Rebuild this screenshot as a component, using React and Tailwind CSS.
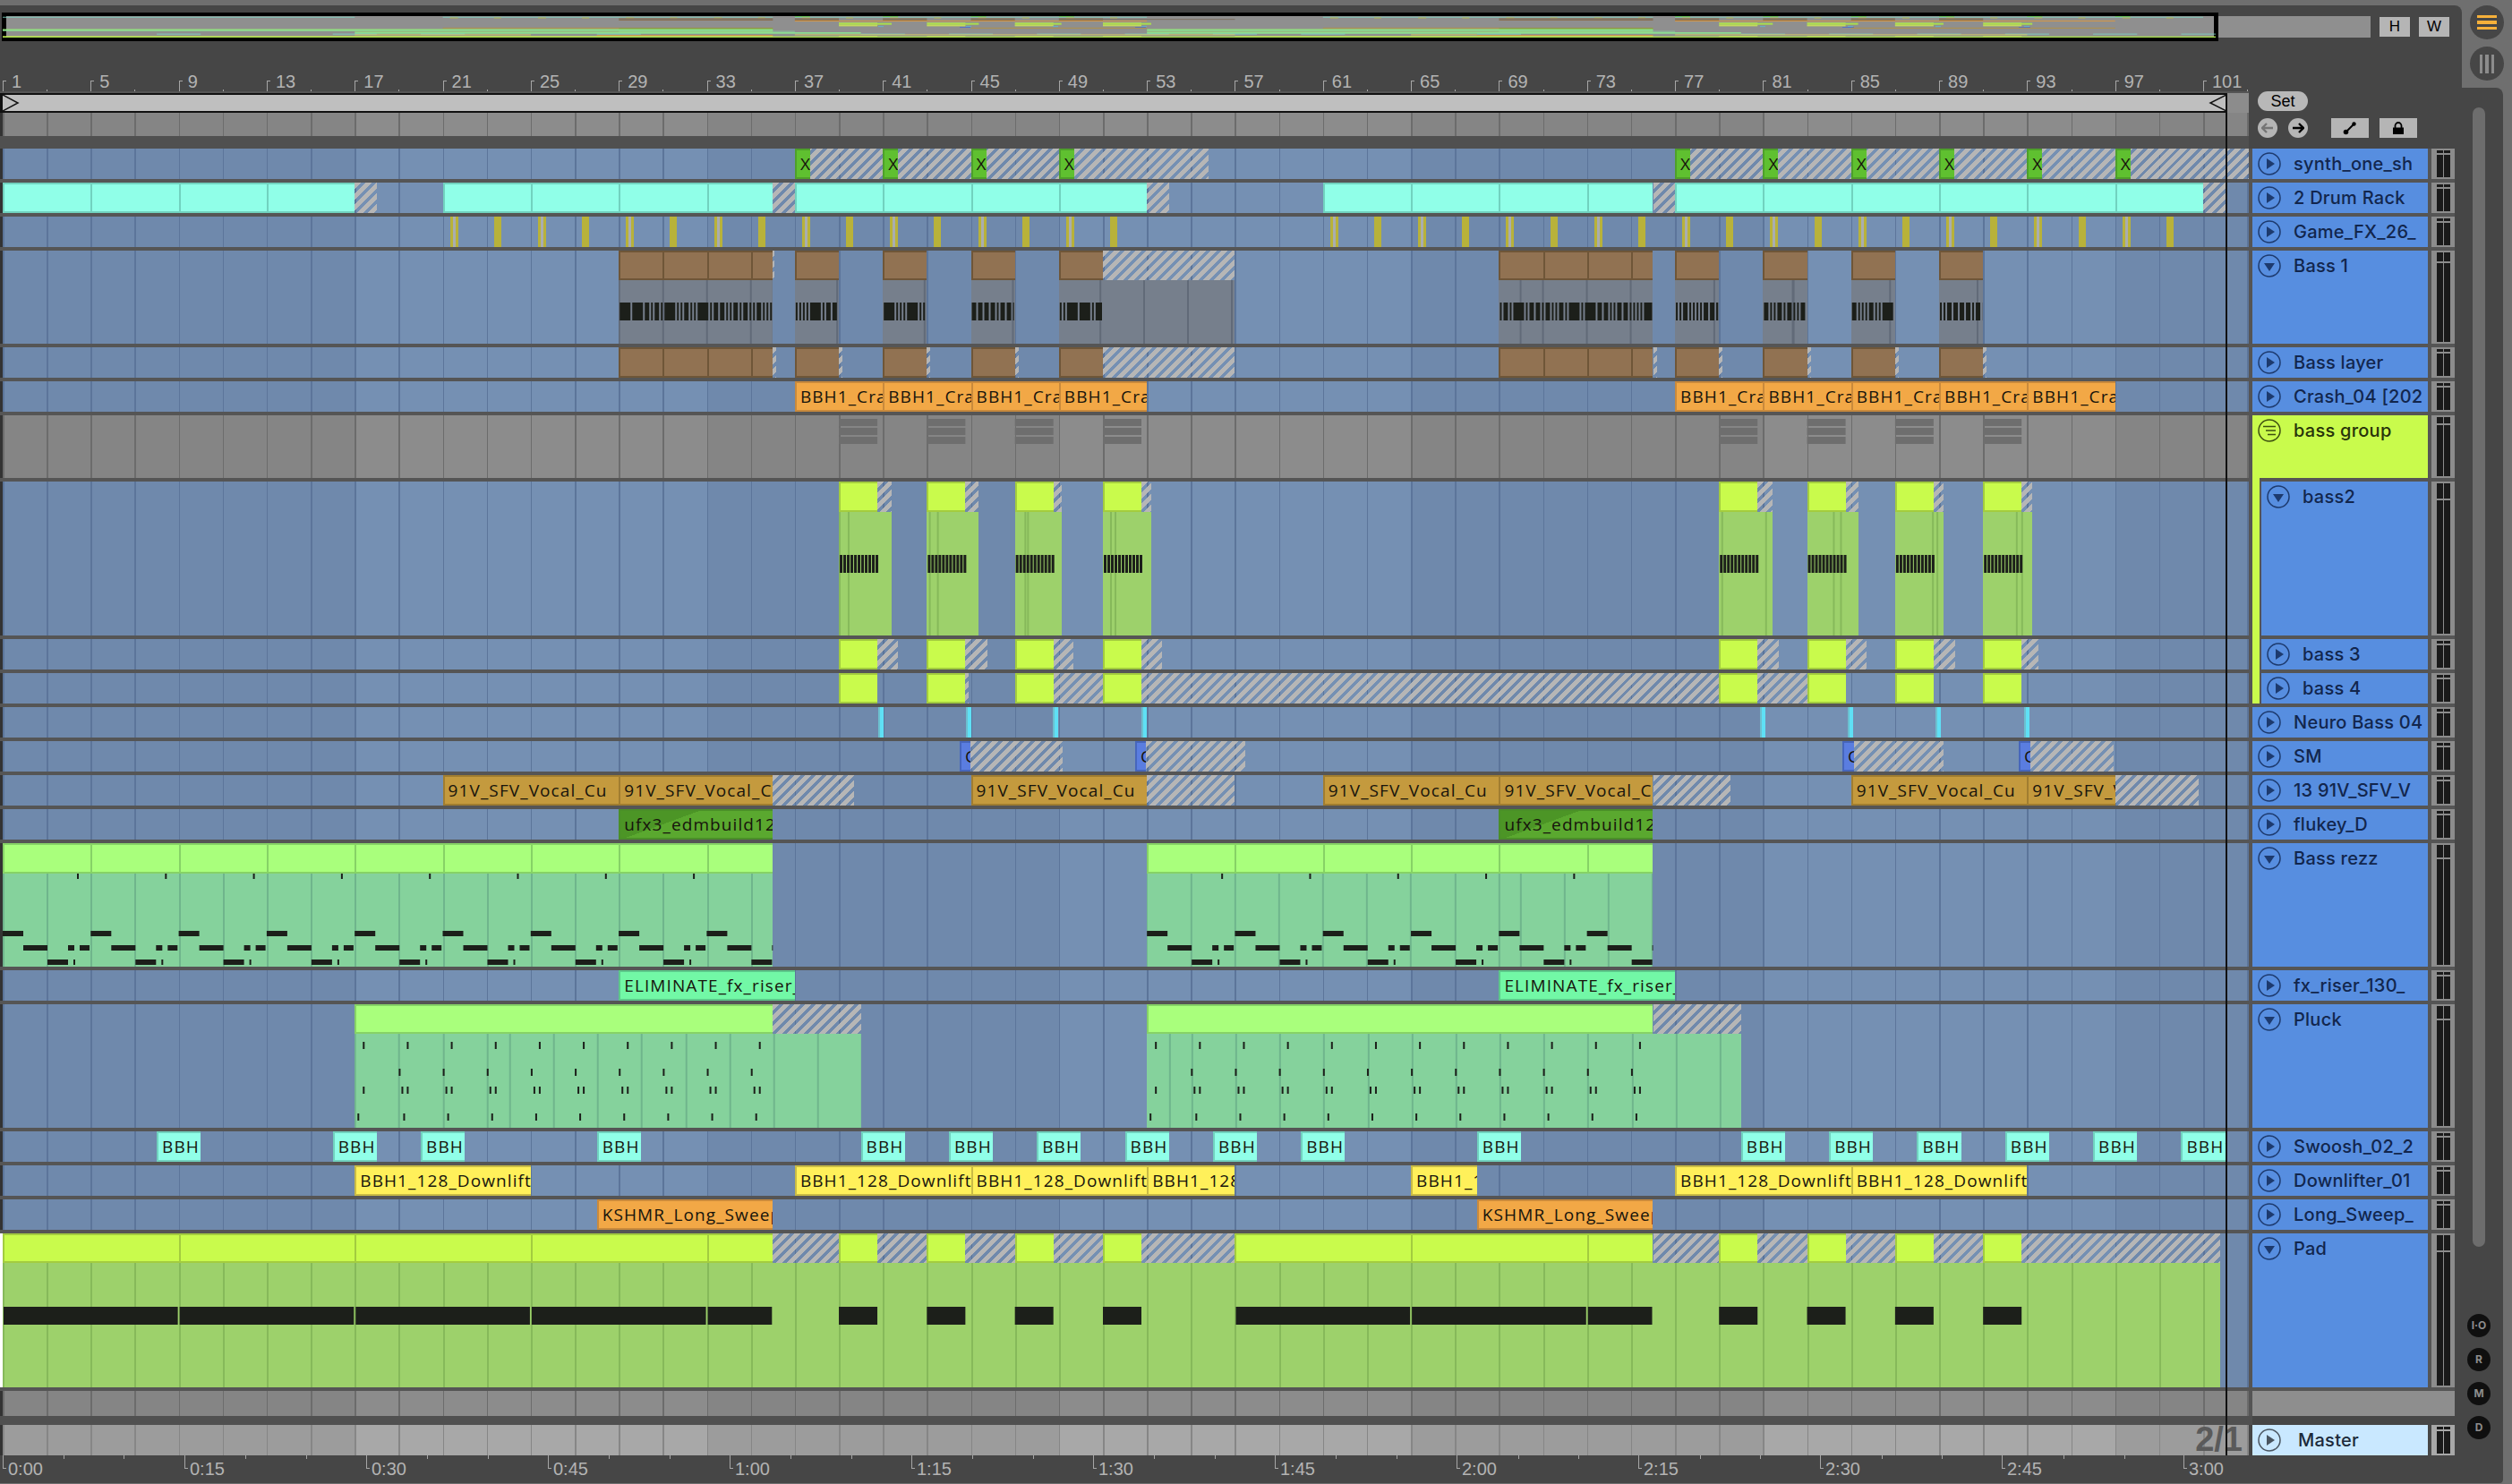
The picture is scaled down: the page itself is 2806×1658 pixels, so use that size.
import React from 'react';

// timeline helpers: bar number or screen x to lane coordinates
const BAR = 24.58;
const b = (n) => (n - 1) * BAR;
const px = (x) => x - 3;

const tones = {
  hatch: { cls: 'bg-[repeating-linear-gradient(135deg,#b6b6b6_0,#b6b6b6_5px,transparent_5px,transparent_8.5px)]' },
  cyan: { cls: 'bg-[#90ffe8] border-2 border-r-0 border-[#71d2bf]', div: 'bg-[#71d2bf]', ov: '#7fd8c8' },
  brown: { cls: 'bg-[#917252] border-y-2 border-l-2 border-[#6f5638]', div: 'bg-[#6f5638]', ov: '#8a6a45' },
  orange: { cls: 'bg-[#f2a846] border-2 border-r-0 border-[#c98a3c]', ov: '#e89a35' },
  lime: { cls: 'bg-[#c9fb4c] border-y-2 border-l-2 border-[#a3cc3f]', div: 'bg-[#a3cc3f]', ov: '#d4f050' },
  mint: { cls: 'bg-[#a9ff7c] border-2 border-r-0 border-[#86d266]', div: 'bg-[#86d266]', ov: '#9cf070' },
  vocal: { cls: 'bg-[#c49a3e] border-2 border-r-0 border-[#a17d30]', ov: '#b8923a' },
  flukey: { cls: 'bg-[linear-gradient(160deg,#4c9526_0,#4c9526_35%,#5aa82f_35%)] border-2 border-r-0 border-[#4a8f28]', ov: '#5aa82f' },
  riser: { cls: 'bg-[#72f8a6] border-2 border-r-0 border-[#5cc98a]', ov: '#88d8a0' },
  yellow: { cls: 'bg-[#fff05a] border-2 border-r-0 border-[#c9bb45]', ov: '#e0d060' },
  x: { cls: 'bg-[#5fc030] border-2 border-r-0 border-[#4ea02a]', ov: '#5fc030' },
  sm: { cls: 'bg-[#5a7de0] border-2 border-r-0 border-[#4666bc]', ov: '#4a6ad0' },
  neuro: { cls: 'bg-[#5fe0f5] border-l-2 border-[#6cc0d0]', ov: '#5bb8d8' },
  tick: { cls: 'bg-[#b8b23a]', ov: '#c0b840' },
  tick2: { cls: 'bg-[linear-gradient(90deg,#b8b23a_0,#b8b23a_3px,#a9adb0_3px,#a9adb0_6px,#b8b23a_6px)]', ov: '#c0b840' },
  bodyGreen: { cls: 'bg-[repeating-linear-gradient(90deg,#6fb58c_0,#6fb58c_2px,#85d29c_2px,#85d29c_49.16px)]', grid: true, ov: '#8ce090' },
  bodyLime: { cls: 'bg-[repeating-linear-gradient(90deg,#86b95a_0,#86b95a_2px,#9dd16b_2px,#9dd16b_49.16px)]', grid: true, ov: '#a8dc50' },
  bodySlate: { cls: 'bg-[repeating-linear-gradient(90deg,#616a78_0,#616a78_2px,#767f8c_2px,#767f8c_49.16px)]', grid: true, ov: '#7f7468' },
};

const laneBlue =
  'bg-[repeating-linear-gradient(90deg,#5c759a_0,#5c759a_1.5px,transparent_1.5px,transparent_49.16px),repeating-linear-gradient(90deg,#6f89ac_0,#6f89ac_393.3px,#7590b3_393.3px,#7590b3_786.6px)]';
const laneGray =
  'bg-[repeating-linear-gradient(90deg,#6c6c6c_0,#6c6c6c_1.5px,transparent_1.5px,transparent_49.16px),repeating-linear-gradient(90deg,#858585_0,#858585_393.3px,#8c8c8c_393.3px,#8c8c8c_786.6px)]';
const laneLight =
  'bg-[repeating-linear-gradient(90deg,#868686_0,#868686_1.5px,transparent_1.5px,transparent_49.16px),repeating-linear-gradient(90deg,#9c9c9c_0,#9c9c9c_393.3px,#a8a8a8_393.3px,#a8a8a8_786.6px)]';

const c = (tone, from, to, opts = {}) => ({ tone, from, to, ...opts });
const label = (tone, text, from, to) => c(tone, b(from), b(to), { text });

// repeated bass pattern
const starts = [39, 43, 47, 51, 79, 83, 87, 91];
const limes = starts.map((n) => [b(n), b(n) + 43]);
const tails2 = [59, 58, 52, 54, 60, 57, 54, 55];
const tails3 = [66, 68, 65, 66, 67, 66, 67, 62];

const barcode = (x0, x1, seed, y, h) => {
  const out = [];
  let r = seed;
  let x = x0;
  while (x < x1) {
    r = (r * 137 + 71) % 256;
    const w = r % 7 === 0 ? 12 : r % 3 === 0 ? 5 : 2;
    out.push([x, y, Math.min(w, x1 - x), h]);
    x += w + 2;
  }
  return out;
};

const stripes = (x0, x1, y, h) => {
  const out = [];
  for (let x = x0; x < x1 - 1; x += 4) out.push([x, y, 3, h]);
  return out;
};

const bassRanges = [[29, 36], [37, 39], [41, 43], [45, 47], [49, 51], [69, 76], [77, 79], [81, 83], [85, 87], [89, 91]];

const rezzNotes = (from, to) => {
  const out = [];
  const pattern = [[83, 34, 2, 6], [0, 98, 23, 6], [23, 114, 27, 6], [73, 114, 7, 6], [86, 114, 11, 6], [50, 130, 23, 6], [79, 130, 2, 6]];
  for (let o = from; o < to; o += 98.3) {
    pattern.forEach(([x, y, w, h]) => {
      if (o + x < to) out.push([o + x, y, Math.min(w, to - o - x), h]);
    });
  }
  return out;
};

// notes stop where the clip's loop ends, the hatched tail stays empty
const pluckNotes = (from, to) => {
  const out = [];
  let i = 0;
  for (let o = from; o < to - 6; o += 49.16) {
    out.push([o + 9, 42, 2, 8], [o + 9, 92, 2, 8]);
    if (i > 0) out.push([o, 72, 2, 8], [o + 3, 92, 2, 8], [o + 5, 122, 2, 8]);
    else out.push([o + 3, 122, 2, 8]);
    i += 1;
  }
  return out;
};

const gameTicks = [];
[[21, 51], [61, 99]].forEach(([s, e]) => {
  for (let n = s, i = 0; n <= e; n += 2, i += 1) {
    gameTicks.push(c(i % 2 === 1 ? 'tick' : 'tick2', b(n) + 8, b(n) + (i % 2 === 1 ? 16 : 17)));
  }
});

const padNotes = [];
for (let n = 1; n < 36; n += 8) padNotes.push([b(n) + 1, 82, Math.min(8, 36 - n) * BAR - 2, 20]);
for (let n = 57; n < 76; n += 8) padNotes.push([b(n) + 1, 82, Math.min(8, 76 - n) * BAR - 2, 20]);

const rows = [
  {
    name: 'synth_one_sh', h: 34,
    clips: [
      c('hatch', b(37), b(55.8)), c('hatch', b(77), 2509),
      ...[37, 41, 45, 49, 77, 81, 85, 89, 93, 97].map((n) => c('x', b(n), b(n) + 17, { text: 'X' })),
    ],
  },
  {
    name: '2 Drum Rack', h: 34,
    clips: [
      ...[[1, 17], [21, 36], [37, 53], [61, 76], [77, 101]].map(([s, e]) => c('cyan', b(s), b(e), { step: 4 })),
      ...[17, 36, 53, 76].map((n) => c('hatch', b(n), b(n + 1))),
      c('hatch', b(101), px(2487)),
    ],
  },
  { name: 'Game_FX_26_', h: 34, clips: gameTicks },
  {
    name: 'Bass 1', h: 104, icon: 'down',
    clips: [
      ...bassRanges.map(([s, e]) => c('bodySlate', b(s), b(e), { top: 33 })),
      ...bassRanges.map(([s, e]) => c('brown', b(s), b(e), { h: 33, step: 2 })),
      c('hatch', b(51), b(57), { h: 33 }),
      c('bodySlate', b(51), b(57), { top: 33 }),
      c('hatch', b(36), b(36) + 2, { h: 33 }),
    ],
    notes: bassRanges.flatMap(([s, e], i) => barcode(b(s) + 1, b(e) - 1, 40 + i * 23, 58, 20)),
  },
  {
    name: 'Bass layer', h: 34,
    clips: [
      ...bassRanges.map(([s, e]) => c('brown', b(s), b(e), { step: 2 })),
      ...bassRanges.map(([, e]) => c('hatch', b(e), b(e) + 4)),
      c('hatch', b(51), b(57)),
    ],
  },
  {
    name: 'Crash_04 [202', h: 34,
    clips: [37, 41, 45, 49, 77, 81, 85, 89, 93].map((n) => label('orange', 'BBH1_Cra', n, n + 4)),
  },
  {
    name: 'bass group', h: 70, icon: 'group', head: 'lime', lane: laneGray,
    clips: [],
    notes: starts.flatMap((n) => [[b(n), 4, 43, 8], [b(n), 14, 43, 8], [b(n), 24, 43, 8]]),
    noteFill: '#6e6e6e',
  },
  {
    name: 'bass2', h: 172, icon: 'down', nested: true,
    clips: [
      ...limes.map(([s], i) => c('bodyLime', s, s + tails2[i], { top: 34 })),
      ...limes.map(([s, e]) => c('lime', s, e, { h: 34 })),
      ...limes.map(([s, e], i) => c('hatch', e, s + tails2[i], { h: 34 })),
    ],
    notes: limes.flatMap(([s, e]) => stripes(s + 1, e, 82, 20)),
  },
  {
    name: 'bass 3', h: 34, nested: true,
    clips: [
      ...limes.map(([s, e]) => c('lime', s, e)),
      ...limes.map(([s, e], i) => c('hatch', e, s + tails3[i])),
    ],
  },
  {
    name: 'bass 4', h: 34, nested: true,
    clips: [
      ...limes.map(([s, e]) => c('lime', s, e)),
      c('hatch', limes[1][1], limes[1][1] + 4),
      c('hatch', limes[2][1], limes[3][0]),
      c('hatch', limes[3][1], limes[4][0]),
      c('hatch', limes[4][1], limes[5][0]),
    ],
  },
  {
    name: 'Neuro Bass 04', h: 34,
    clips: [981, 1079, 1176, 1275, 1966, 2064, 2162, 2261].map((x) => c('neuro', px(x), px(x) + 6)),
  },
  {
    name: 'SM', h: 34,
    clips: [[1072, 1084, 1187], [1268, 1280, 1391], [2058, 2071, 2171], [2255, 2268, 2361]].flatMap(([s, m, e]) => [
      c('sm', px(s), px(m), { text: 'C' }),
      c('hatch', px(m), px(e)),
    ]),
  },
  {
    name: '13 91V_SFV_V', h: 34,
    clips: [
      label('vocal', '91V_SFV_Vocal_Cu', 21, 29), label('vocal', '91V_SFV_Vocal_Cu', 29, 36), c('hatch', b(36), b(39.7)),
      label('vocal', '91V_SFV_Vocal_Cu', 45, 53), c('hatch', b(53), b(57)),
      label('vocal', '91V_SFV_Vocal_Cu', 61, 69), label('vocal', '91V_SFV_Vocal_Cu', 69, 76), c('hatch', b(76), b(79.5)),
      label('vocal', '91V_SFV_Vocal_Cu', 85, 93), label('vocal', '91V_SFV_Vocal_Cu', 93, 97), c('hatch', b(97), b(100.8)),
    ],
  },
  {
    name: 'flukey_D', h: 34,
    clips: [label('flukey', 'ufx3_edmbuild128', 29, 36), label('flukey', 'ufx3_edmbuild128', 69, 76)],
  },
  {
    name: 'Bass rezz', h: 138, icon: 'down',
    clips: [
      c('bodyGreen', b(1), b(36), { top: 34 }), c('bodyGreen', b(53), b(76), { top: 34 }),
      c('mint', b(1), b(36), { h: 34, step: 4 }), c('mint', b(53), b(76), { h: 34, step: 4 }),
    ],
    notes: [...rezzNotes(b(1), b(36)), ...rezzNotes(b(53), b(76))],
  },
  {
    name: 'fx_riser_130_', h: 34,
    clips: [label('riser', 'ELIMINATE_fx_riser_', 29, 37), label('riser', 'ELIMINATE_fx_riser_', 69, 77)],
  },
  {
    name: 'Pluck', h: 138, icon: 'down',
    clips: [
      c('bodyGreen', b(17), b(40), { top: 33 }), c('bodyGreen', b(53), b(80), { top: 33 }),
      c('mint', b(17), b(36), { h: 33 }), c('mint', b(53), b(76), { h: 33 }),
      c('hatch', b(36), b(40), { h: 33 }), c('hatch', b(76), b(80), { h: 33 }),
    ],
    notes: [...pluckNotes(b(17), b(36)), ...pluckNotes(b(53), b(76))],
  },
  {
    name: 'Swoosh_02_2', h: 34,
    clips: [8, 16, 20, 28, 40, 44, 48, 52, 56, 60, 68, 80, 84, 88, 92, 96, 100].map((n) => label('cyan', 'BBH1_', n, n + 2)),
  },
  {
    name: 'Downlifter_01', h: 34,
    clips: [[17, 25], [37, 45], [45, 53], [53, 57], [65, 68], [77, 85], [85, 93]].map(([s, e]) => label('yellow', 'BBH1_128_Downlifter', s, e)),
  },
  {
    name: 'Long_Sweep_', h: 34,
    clips: [label('orange', 'KSHMR_Long_Sweep', 28, 36), label('orange', 'KSHMR_Long_Sweep', 68, 76)],
  },
  {
    name: 'Pad', h: 172, icon: 'down',
    clips: [
      c('bodyLime', b(1), px(2480), { top: 33 }),
      c('lime', b(1), b(36), { h: 33, step: 8 }),
      c('lime', b(57), b(76), { h: 33, step: 8 }),
      ...limes.map(([s, e]) => c('lime', s, e, { h: 33 })),
      c('hatch', b(36), limes[0][0], { h: 33 }),
      c('hatch', limes[0][1], limes[1][0], { h: 33 }),
      c('hatch', limes[1][1], limes[2][0], { h: 33 }),
      c('hatch', limes[2][1], limes[3][0], { h: 33 }),
      c('hatch', limes[3][1], b(57), { h: 33 }),
      c('hatch', b(76), limes[4][0], { h: 33 }),
      c('hatch', limes[4][1], limes[5][0], { h: 33 }),
      c('hatch', limes[5][1], limes[6][0], { h: 33 }),
      c('hatch', limes[6][1], limes[7][0], { h: 33 }),
      c('hatch', limes[7][1], px(2480), { h: 33 }),
    ],
    notes: [...padNotes, ...limes.map(([s, e]) => [s, 82, e - s, 20])],
    selected: true,
  },
];

const Clip = ({ clip }) => {
  const tone = tones[clip.tone];
  const width = clip.to - clip.from;
  const style = { left: clip.from, width, top: clip.top ?? 0 };
  if (clip.h) style.height = clip.h;
  else style.bottom = 0;
  if (tone.grid) style.backgroundPositionX = -clip.from;
  const dividers = [];
  if (clip.step) {
    for (let o = clip.step * BAR; o < width - 4; o += clip.step * BAR) dividers.push(o);
  }
  return (
    <div className={`absolute overflow-hidden ${tone.cls}`} style={style}>
      {dividers.map((o) => (
        <div key={o} className={`absolute inset-y-0 w-0.5 ${tone.div}`} style={{ left: o - 2 }} />
      ))}
      {clip.text && (
        <div className="flex h-full items-center whitespace-nowrap pl-1 font-['Open_Sans',sans-serif] text-[19px] leading-none tracking-[1.1px] text-[#17140c]">
          {clip.text}
        </div>
      )}
    </div>
  );
};

const Notes = ({ row }) => (
  <svg className="absolute inset-0" width="2509" height={row.h}>
    {row.notes.map(([x, y, w, h], i) => (
      <rect key={i} x={x} y={y} width={w} height={h} fill={row.noteFill || '#1c1f1a'} />
    ))}
  </svg>
);

const Lane = ({ row }) => (
  <div
    className={`relative w-[2512px] shrink-0 overflow-hidden border-l-[3px] ${row.selected ? 'border-white' : 'border-[#333333]'} ${row.lane || laneBlue}`}
  >
    {row.clips.map((clip, i) => (
      <Clip key={i} clip={clip} />
    ))}
    {row.notes && <Notes row={row} />}
  </div>
);

const FoldIcon = ({ kind = 'play', color = '#1d3a6e' }) => (
  <svg width="26" height="26" viewBox="0 0 26 26" className="shrink-0">
    <circle cx="13" cy="13" r="12" fill="none" stroke={color} strokeWidth="1.5" />
    {kind === 'play' && <path d="M10 7 L19 13 L10 19 Z" fill={color} />}
    {kind === 'down' && <path d="M7 10 L19 10 L13 19 Z" fill={color} />}
    {kind === 'group' && (
      <path d="M6 8.5 H20 M9 13 H20 M11 17.5 H20" stroke={color} strokeWidth="1.6" fill="none" />
    )}
  </svg>
);

const Meter = ({ h, light }) => {
  const cap = Math.max(2, Math.round(h * 0.1));
  return (
    <div className={`flex w-[26px] shrink-0 justify-center gap-px py-0.5 ${light ? 'bg-[#a8a8a8]' : 'bg-[#8c8c8c]'}`}>
      {[0, 1].map((i) => (
        <div key={i} className="flex w-[7px] flex-col gap-0.5">
          <div className="bg-[#1a1a1a]" style={{ height: cap }} />
          <div className="flex-1 bg-[#1a1a1a]" />
        </div>
      ))}
    </div>
  );
};

const TrackHead = ({ row }) => {
  const isLime = row.head === 'lime';
  return (
    <div className="relative flex w-[196px] shrink-0">
      {row.nested && (
        <>
          <div className="absolute -top-1 bottom-0 left-0 w-2 bg-[#c9fb4c]" />
          <div className="w-2.5 shrink-0" />
        </>
      )}
      <div className={`flex h-full flex-1 items-start font-['Inter',sans-serif] text-[20px] font-medium tracking-[0.25px] ${isLime ? 'bg-[#c9fb4c] text-[#27330a]' : 'bg-[#578ee0] text-[#12264d]'}`}>
        <div className="flex h-[34px] items-center pl-1.5">
          <FoldIcon kind={row.icon || 'play'} color={isLime ? '#3d4f10' : '#1d3a6e'} />
          <span className="ml-[14px] whitespace-nowrap">{row.name}</span>
        </div>
      </div>
    </div>
  );
};

// small copy of all clips, drawn into the overview strip
const overview = () => {
  const out = [];
  let y = 0;
  rows.forEach((row) => {
    const rowH = 0.35 + row.h / 75;
    row.clips.forEach((clip, i) => {
      const ov = tones[clip.tone].ov;
      if (!ov) return;
      const k = rowH / row.h;
      const top = y + (clip.top ?? 0) * k;
      const height = (clip.h ?? row.h - (clip.top ?? 0)) * k;
      out.push(<rect key={`${row.name}-${i}`} x={clip.from} y={top} width={clip.to - clip.from} height={height} fill={ov} />);
    });
    y += rowH;
  });
  return out;
};

const barLabels = [];
for (let n = 1; n <= 101; n += 4) barLabels.push(n);
const minorTicks = [];
for (let n = 3; n <= 103; n += 4) minorTicks.push(n);

const times = ['0:00', '0:15', '0:30', '0:45', '1:00', '1:15', '1:30', '1:45', '2:00', '2:15', '2:30', '2:45', '3:00'];
const timeMinor = [];
for (let i = 1; i < 37; i += 1) if (i % 3 !== 0) timeMinor.push(i * 67.7);

const SmallButton = ({ children }) => (
  <div className="flex h-[22px] w-[42px] items-center justify-center bg-[#b5b5b5]">{children}</div>
);

const Round = ({ children }) => (
  <div className="flex h-[26px] w-[26px] items-center justify-center rounded-full bg-[#0f0f0f] text-[12px] font-bold text-[#8c8c8c]">
    {children}
  </div>
);

export default function App() {
  const masterRow = { clips: [], lane: laneLight };
  return (
    <div className="flex h-[1658px] w-[2806px] overflow-hidden bg-[#6f6f6f] font-['Liberation_Sans',sans-serif]">
      <div className="relative mt-1.5 h-[1651px] w-[2750px] shrink-0 rounded-tr-lg bg-[#464646]">
        {/* overview strip */}
        <div className="mt-2 flex h-8 items-center">
          <div className="relative ml-0.5 h-8 w-[2476px] border-x-[5px] border-y-4 border-black bg-[#8f8f8f]">
            <svg className="absolute left-[-4px] top-0" width="2472" height="24">
              {overview()}
            </svg>
          </div>
          <div className="h-6 w-[170px] bg-[#8f8f8f]" />
          <div className="ml-2.5 flex h-[22px] w-[34px] items-center justify-center bg-[#b5b5b5] text-[17px] text-black">H</div>
          <div className="ml-2.5 flex h-[22px] w-[34px] items-center justify-center bg-[#b5b5b5] text-[17px] text-black">W</div>
        </div>

        {/* ruler, loop brace and scrub row */}
        <div className="mt-[38px] flex h-[82px]">
          <div className="flex w-[2512px] shrink-0 flex-col">
            <div className="relative h-[18px]">
              {barLabels.map((n) => (
                <div key={n} className="absolute inset-y-0" style={{ left: b(n) + 3 }}>
                  <div className="absolute left-0 top-[6px] h-3 w-1 border-l border-t border-[#a6a6a6]" />
                  <span className="absolute left-[10px] top-[-3px] text-[20px] leading-5 text-[#b3b3b3]">{n}</span>
                </div>
              ))}
              {minorTicks.map((n) => (
                <div key={n} className="absolute bottom-0 h-0.5 w-px bg-[#a6a6a6]" style={{ left: b(n) + 3 }} />
              ))}
            </div>
            <div className="h-0.5 bg-[#555555]" />
            <div className="flex h-[22px]">
              <div className="relative w-[2487px] shrink-0 border-y-2 border-l-[3px] border-[#111111] bg-[#bfbfbf]">
                <svg className="absolute left-0 top-0" width="20" height="18">
                  <path d="M0 0 L17 9 L0 18" fill="none" stroke="#111111" strokeWidth="1.5" />
                </svg>
                <svg className="absolute right-0 top-0" width="20" height="18">
                  <path d="M20 0 L2 9 L20 18" fill="none" stroke="#111111" strokeWidth="1.5" />
                </svg>
              </div>
              <div className="flex-1 bg-[#8c8c8c]" />
            </div>
            <div className={`h-[26px] border-l-[3px] border-[#333333] ${laneGray}`} />
            <div className="h-3.5 bg-[#505050]" />
          </div>
          <div className="ml-2.5 flex flex-col">
            <div className="mt-[18px] flex h-[22px] w-14 items-center justify-center rounded-full bg-[#b8b8b8] text-[18px] text-black">Set</div>
            <div className="mt-2 flex items-center">
              <div className="flex h-[22px] w-[22px] items-center justify-center rounded-full bg-[#b5b5b5]">
                <svg width="14" height="12" viewBox="0 0 14 12"><path d="M6 1 L1 6 L6 11 M1 6 H13" fill="none" stroke="#757575" strokeWidth="2.4" /></svg>
              </div>
              <div className="ml-3 flex h-[22px] w-[22px] items-center justify-center rounded-full bg-[#b5b5b5]">
                <svg width="14" height="12" viewBox="0 0 14 12"><path d="M8 1 L13 6 L8 11 M13 6 H1" fill="none" stroke="#000000" strokeWidth="2.4" /></svg>
              </div>
              <div className="ml-[26px]">
                <SmallButton>
                  <svg width="16" height="16" viewBox="0 0 16 16">
                    <path d="M4 12 L12 4" stroke="#000000" strokeWidth="2" />
                    <circle cx="3.5" cy="12.5" r="2.8" /><circle cx="12.5" cy="3.5" r="2.2" />
                  </svg>
                </SmallButton>
              </div>
              <div className="ml-3">
                <SmallButton>
                  <svg width="16" height="16" viewBox="0 0 16 16">
                    <path d="M4.5 8 V5.5 a3.5 3.5 0 0 1 7 0 V8" fill="none" stroke="#000000" strokeWidth="1.8" />
                    <rect x="2" y="7.5" width="12" height="7.5" />
                  </svg>
                </SmallButton>
              </div>
            </div>
          </div>
        </div>

        {/* tracks */}
        <div className="flex w-[2742px] flex-col gap-1 bg-[#555555]">
          {rows.map((row) => (
            <div key={row.name} className="flex gap-1" style={{ height: row.h }}>
              <Lane row={row} />
              <TrackHead row={row} />
              <Meter h={row.h} />
            </div>
          ))}
          <div className="flex h-7 gap-1">
            <div className={`w-[2512px] shrink-0 border-l-[3px] border-[#333333] ${laneGray}`} />
            <div className="flex-1 bg-[#8e8e8e]" />
          </div>
        </div>
        <div className="h-2.5 w-[2516px] bg-[#505050]" />

        {/* master */}
        <div className="flex h-[34px] w-[2742px] gap-1">
          <div className="relative flex w-[2512px] shrink-0">
            <Lane row={masterRow} />
            <div className="absolute right-[7px] top-[-4px] text-[38px] font-bold leading-10 text-[#5a5a5a]">2/1</div>
          </div>
          <div className="flex w-[196px] shrink-0 items-center bg-[#c9e8ff] pl-1.5 font-['Inter',sans-serif] text-[20px] font-medium tracking-[0.25px] text-[#1c2a3a]">
            <FoldIcon color="#4a5560" />
            <span className="ml-[19px]">Master</span>
          </div>
          <Meter h={34} light />
        </div>

        {/* time ruler */}
        <div className="relative h-[31px] w-[2512px]">
          {times.map((t, i) => (
            <div key={t} className="absolute inset-y-0" style={{ left: 3 + i * 203 }}>
              <div className="absolute left-0 top-0 h-[15px] w-1 border-b border-l border-[#a6a6a6]" />
              <span className="absolute left-1.5 top-[5px] text-[20px] leading-5 text-[#b3b3b3]">{t}</span>
            </div>
          ))}
          {timeMinor.map((x) => (
            <div key={x} className="absolute top-0 h-1 w-px bg-[#a6a6a6]" style={{ left: 3 + x }} />
          ))}
        </div>

        {/* loop end marker runs over the lanes */}
        <div className="absolute left-[2486px] top-[98px] h-[1522px] w-0.5 bg-[#111111]" />
      </div>

      <div className="flex w-14 shrink-0 flex-col">
        <div className="flex h-[98px] flex-col items-center gap-2 pt-1.5">
          <div className="flex h-[38px] w-[38px] flex-col items-center justify-center gap-[3px] rounded-full bg-[#464646]">
            <div className="h-[3.5px] w-[22px] bg-[#f5b03a]" />
            <div className="h-[3.5px] w-[22px] bg-[#f5b03a]" />
            <div className="h-[3.5px] w-[22px] bg-[#f5b03a]" />
          </div>
          <div className="flex h-[38px] w-[38px] items-center justify-center gap-[3px] rounded-full bg-[#464646]">
            <div className="h-[21px] w-[3.5px] bg-[#8c8c8c]" />
            <div className="h-[21px] w-[3.5px] bg-[#8c8c8c]" />
            <div className="h-[21px] w-[3.5px] bg-[#8c8c8c]" />
          </div>
        </div>
        <div className="h-[1559px] w-[46px] rounded-tr-lg rounded-br bg-[#464646]">
          <div className="ml-1.5 flex w-[26px] flex-col items-center">
            <div className="mt-[22px] h-[1273px] w-3.5 rounded-full bg-[#6d6d6d]" />
            <div className="mt-[75px] flex flex-col gap-3 font-['Inter',sans-serif]">
              <Round>I·O</Round>
              <Round>R</Round>
              <Round>M</Round>
              <Round>D</Round>
            </div>
          </div>
        </div>
      </div>
    </div>
  );
}
